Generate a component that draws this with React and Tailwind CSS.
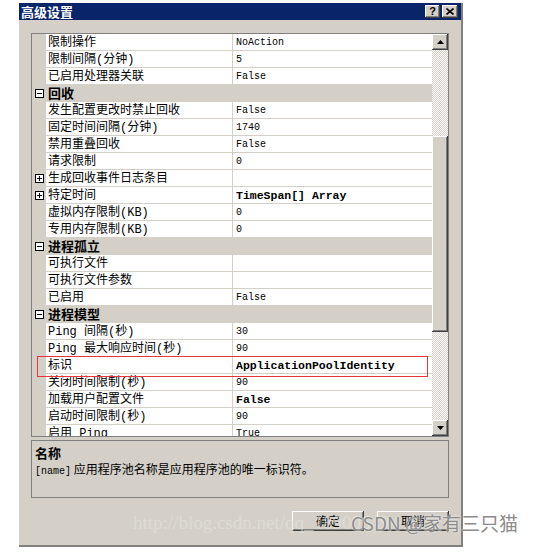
const rows = [
  { n: "限制操作", v: "NoAction" },
  { n: "限制间隔(分钟)", v: "5" },
  { n: "已启用处理器关联", v: "False" },
  { cat: "回收" },
  { n: "发生配置更改时禁止回收", v: "False" },
  { n: "固定时间间隔(分钟)", v: "1740" },
  { n: "禁用重叠回收", v: "False" },
  { n: "请求限制", v: "0" },
  { n: "生成回收事件日志条目", v: "", plus: true },
  { n: "特定时间", v: "TimeSpan[] Array", plus: true, bold: true },
  { n: "虚拟内存限制(KB)", v: "0" },
  { n: "专用内存限制(KB)", v: "0" },
  { cat: "进程孤立" },
  { n: "可执行文件", v: "" },
  { n: "可执行文件参数", v: "" },
  { n: "已启用", v: "False" },
  { cat: "进程模型" },
  { n: "Ping 间隔(秒)", v: "30" },
  { n: "Ping 最大响应时间(秒)", v: "90" },
  { n: "标识", v: "ApplicationPoolIdentity", bold: true },
  { n: "关闭时间限制(秒)", v: "90" },
  { n: "加载用户配置文件", v: "False", bold: true },
  { n: "启动时间限制(秒)", v: "90" },
  { n: "启用 Ping", v: "True" },
];

const raised =
  "bg-[#d4d0c8] shadow-[inset_-1px_-1px_#404040,inset_1px_1px_#ffffff,inset_-2px_-2px_#808080]";
const checker =
  "bg-[conic-gradient(#d4d0c8_25%,#ffffff_0_50%,#d4d0c8_0_75%,#ffffff_0)] bg-[length:2px_2px]";

function Toggle({ open }) {
  return (
    <svg width="9" height="9" viewBox="0 0 9 9" className="shrink-0">
      <rect x="0.5" y="0.5" width="8" height="8" fill="white" stroke="#000" />
      <line x1="2" y1="4.5" x2="7" y2="4.5" stroke="#000" />
      {!open && <line x1="4.5" y1="2" x2="4.5" y2="7" stroke="#000" />}
    </svg>
  );
}

function Row({ r }) {
  if (r.cat) {
    return (
      <div className="h-[17px] flex items-center bg-[#d4d0c8]">
        <div className="w-[14px] flex justify-center">
          <Toggle open />
        </div>
        <span className="pl-[2px] pt-[1px] text-[13px] font-bold leading-none">{r.cat}</span>
      </div>
    );
  }
  return (
    <div className="h-[17px] flex">
      <div className="w-[14px] bg-[#d4d0c8] flex items-center justify-center">
        {r.plus && <Toggle />}
      </div>
      <div className="w-[186px] border-b border-[#d4d0c8] bg-white flex items-center pl-[2px] pt-[1px] text-[12px] leading-none whitespace-nowrap overflow-hidden">
        {r.n}
      </div>
      <div className="w-px bg-[#d4d0c8]" />
      <div
        className={
          "flex-1 border-b border-[#d4d0c8] bg-white flex items-center pl-[3px] pt-[1px] leading-none whitespace-nowrap font-['Liberation_Mono',monospace] " +
          (r.bold ? "font-bold text-[11.5px]" : "text-[10px]")
        }
      >
        {r.v}
      </div>
    </div>
  );
}

function Arrow({ down }) {
  return (
    <div className={"w-[16px] h-[16px] flex items-center justify-center " + raised}>
      <svg width="7" height="4" viewBox="0 0 7 4">
        {down ? (
          <polygon points="0,0 7,0 3.5,4" fill="#000" />
        ) : (
          <polygon points="0,4 7,4 3.5,0" fill="#000" />
        )}
      </svg>
    </div>
  );
}

export default function App() {
  return (
    <div className="relative w-[538px] h-[552px] bg-white overflow-hidden font-['Liberation_Mono','Noto_Sans_CJK_SC',monospace] text-black">
      {/* Dialog */}
      <div className="ml-[19px] mt-[3px] w-[444px] bg-[#d4d0c8] border-r-2 border-b-2 border-[#808080] flex flex-col">
        {/* Title bar */}
        <div className="h-[17px] bg-[#0a246a] flex items-center justify-between pl-[2px] pr-[3px]">
          <span className="text-white font-bold text-[13px] leading-none font-['Noto_Sans_CJK_SC',sans-serif]">
            高级设置
          </span>
          <div className="flex gap-[2px]">
            <div className={"w-[15px] h-[13px] flex items-center justify-center text-[11px] font-bold leading-none font-['Liberation_Sans',sans-serif] " + raised}>
              ?
            </div>
            <div className={"w-[16px] h-[13px] flex items-center justify-center " + raised}>
              <svg width="8" height="7" viewBox="0 0 8 7">
                <path d="M0.5 0.5 L7.5 6.5 M7.5 0.5 L0.5 6.5" stroke="#000" strokeWidth="1.6" />
              </svg>
            </div>
          </div>
        </div>

        <div className="px-[12px] pt-[13px] pb-[14px] flex flex-col">
          {/* Property grid */}
          <div className="w-[418px] h-[404px] border border-[#808080] flex">
            <div className="relative w-[400px] h-[402px] overflow-hidden">
              {rows.map((r, i) => (
                <Row key={i} r={r} />
              ))}
              {/* highlight */}
              <div className="absolute left-[5px] top-[322px] w-[391px] h-[21px] border-[1.5px] border-[#e8343b]" />
            </div>
            {/* Scrollbar */}
            <div className="w-[16px] h-[402px] flex flex-col">
              <Arrow />
              <div className={"h-[86px] " + checker} />
              <div className={"h-[196px] " + raised} />
              <div className={"flex-1 " + checker} />
              <Arrow down />
            </div>
          </div>

          {/* Description */}
          <div className="mt-[3px] w-[418px] h-[58px] border border-[#808080] px-[3px] pt-[4px] font-['Noto_Sans_CJK_SC',sans-serif]">
            <div className="text-[13px] font-bold leading-[15px]">名称</div>
            <div className="text-[12px] leading-[17px] whitespace-nowrap">
              <span className="font-['Liberation_Mono',monospace] text-[10px]">[name]</span> 应用程序池名称是应用程序池的唯一标识符。
            </div>
          </div>

          {/* Buttons */}
          <div className="mt-[13px] flex justify-end gap-[13px] w-[418px]">
            <div className={"w-[72px] h-[20px] flex items-center justify-center text-[12px] font-['Noto_Sans_CJK_SC',sans-serif] " + raised}>
              确定
            </div>
            <div className={"w-[72px] h-[20px] flex items-center justify-center text-[12px] font-['Noto_Sans_CJK_SC',sans-serif] " + raised}>
              取消
            </div>
          </div>
        </div>
      </div>

      {/* Watermarks */}
      <div className="absolute left-[133px] top-[513px] text-[19px] leading-none text-[#e6e3de] opacity-60 whitespace-nowrap font-['Liberation_Serif',serif]">
        http://blog.csdn.net/qq_18900649
      </div>
      <div className="absolute left-[351px] top-[511px] text-[19px] leading-[24px] text-[#8c8c8c] whitespace-nowrap font-['Noto_Sans_CJK_SC',sans-serif] [text-shadow:0_0_2px_#ffffff]">
        CSDN @家有三只猫
      </div>
    </div>
  );
}
